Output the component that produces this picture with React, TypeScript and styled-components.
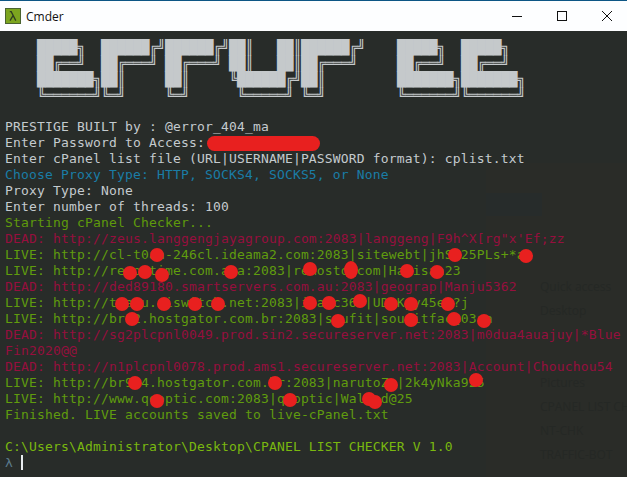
import { FC } from 'react'
import styled, { createGlobalStyle } from 'styled-components'

const GlobalStyle = createGlobalStyle`
  html, body {
    margin: 0;
    padding: 0;
    background: #282c29;
  }
`

type Tone = 'art' | 'white' | 'blue' | 'start' | 'dead' | 'live' | 'path' | 'plain'

const tones: Record<Tone, string> = {
  art: '#c5c9cb',
  white: '#c4cace',
  blue: '#1a7da6',
  start: '#5f9a0c',
  dead: '#960f3e',
  live: '#609c0e',
  path: '#7ab80f',
  plain: '#c4cace',
}

const Window = styled.div`
  position: relative;
  width: 627px;
  height: 477px;
  display: flex;
  flex-direction: column;
  overflow: hidden;
`

const TitleBar = styled.header`
  flex: 0 0 31px;
  box-sizing: border-box;
  display: flex;
  align-items: center;
  border-top: 1px solid #0d5685;
  background: #fdfeff;
  padding-left: 5px;
`

const AppIcon = styled.svg`
  width: 16px;
  height: 16px;
  flex: none;
`

const Title = styled.span`
  margin-left: 5px;
  font: 12px 'Open Sans', sans-serif;
  color: #111;
  flex: 1;
`

const Controls = styled.div`
  display: flex;
  margin-right: -2px;
`

const ControlButton = styled.div`
  width: 45px;
  height: 30px;
  display: flex;
  align-items: center;
  justify-content: center;
  svg {
    width: 10px;
    height: 10px;
    stroke: #111;
    stroke-width: 1;
    fill: none;
  }
`

const Terminal = styled.main`
  position: relative;
  flex: 1;
  box-sizing: border-box;
  padding: 8px 0 0 5px;
  background: #282c29;
  overflow: hidden;
`

/* the explorer window that shines through the transparent console */
const GhostPanel = styled.div`
  position: absolute;
  left: 486px;
  top: 132px;
  right: 0;
  bottom: 0;
  background: #2a2c28;
  display: flex;
  flex-direction: column;
`

const GhostTab = styled.div`
  width: 56px;
  height: 23px;
  margin-top: 30px;
  background: #272c2b;
`

const GhostList = styled.ul`
  list-style: none;
  margin: 62px 0 0;
  padding: 0 0 0 54px;
  display: flex;
  flex-direction: column;
  gap: 6px;
`

const GhostItem = styled.li<{ $gapAfter?: number }>`
  font: 12px/18px 'Open Sans', sans-serif;
  color: #252825;
  white-space: nowrap;
  margin-bottom: ${(p) => p.$gapAfter ?? 0}px;
`

const Lines = styled.div`
  position: relative;
  font-family: 'DejaVu Sans Mono', monospace;
  font-size: 13px;
  letter-spacing: 0.17px;
  line-height: 16px;
`

const Row = styled.div<{ $tone: Tone }>`
  height: 16px;
  white-space: pre;
  color: ${(p) => tones[p.$tone]};
`

const Banner = styled.div`
  font-size: 14px;
  letter-spacing: -0.43px;
`

const Prompt = styled.span`
  color: #5b7b8c;
`

const Cursor = styled.span`
  display: inline-block;
  width: 2px;
  height: 15px;
  background: #e8ecee;
  vertical-align: -3px;
`

const Mark = styled.span<{ $x: number; $y: number; $w: number; $h: number }>`
  position: absolute;
  left: ${(p) => p.$x - p.$w / 2}px;
  top: ${(p) => p.$y - p.$h / 2}px;
  width: ${(p) => p.$w}px;
  height: ${(p) => p.$h}px;
  border-radius: 50%;
  background: #e8201f;
`

const PasswordBlot = styled.span`
  position: absolute;
  left: 207px;
  top: 136px;
  width: 113px;
  height: 15px;
  border-radius: 8px;
  background: #e8201f;
`

const banner = [
  '    █████╗  ██████╔╝██████╔╝██║   ██║██████╔╝    █████╗  █████╗  ',
  '    ██╔══╝  ██╔═══╝ ██╔═══╝ ██║   ██║██╔═══╝     ██╔══╝  ██╔══╝  ',
  '    ███████╗██║     ██║     ╚██████╔╝██║         ███████╗███████╗',
  '    ╚══════╝╚═╝     ╚═╝      ╚═════╝ ╚═╝         ╚══════╝╚══════╝',
]

const output: [Tone, string][] = [
  ['plain', ''],
  ['white', 'PRESTIGE BUILT by : @error_404_ma'],
  ['white', 'Enter Password to Access: '],
  ['white', 'Enter cPanel list file (URL|USERNAME|PASSWORD format): cplist.txt'],
  ['blue', 'Choose Proxy Type: HTTP, SOCKS4, SOCKS5, or None'],
  ['white', 'Proxy Type: None'],
  ['white', 'Enter number of threads: 100'],
  ['start', 'Starting cPanel Checker...'],
  ['dead', `DEAD: http://zeus.langgengjayagroup.com:2083|langgeng|F9h^X[rg"x'Ef;zz`],
  ['live', 'LIVE: http://cl-t0aa-246cl.ideama2.com:2083|sitewebt|jhSa25PLs+*aa'],
  ['live', 'LIVE: http://remostime.com.aua:2083|remosto.com|Hamisaa23'],
  ['dead', 'DEAD: http://ded89180.smartservers.com.au:2083|geograp|Manju5362'],
  ['live', 'LIVE: http://taasu.aiswitch.net:2083|ioa1c366|UDgKpy45eA?j'],
  ['live', 'LIVE: http://br12.hostgator.com.br:2083|soufit|soufitfac@03aa'],
  ['dead', 'DEAD: http://sg2plcpnl0049.prod.sin2.secureserver.net:2083|m0dua4auajuy|*Blue'],
  ['dead', 'Fin2020@@'],
  ['dead', 'DEAD: http://n1plcpnl0078.prod.ams1.secureserver.net:2083|Account|Chouchou54'],
  ['live', 'LIVE: http://br904.hostgator.com.br:2083|narutoZa|2k4yNka925'],
  ['live', 'LIVE: http://www.qooptic.com:2083|qooptic|Waleed@25'],
  ['live', 'Finished. LIVE accounts saved to live-cPanel.txt'],
  ['plain', ''],
  ['path', 'C:\\Users\\Administrator\\Desktop\\CPANEL LIST CHECKER V 1.0'],
]

// [x, y, w, h] centre of each blot, in page pixels
const marks: [number, number, number, number][] = [
  [157, 255, 14, 14], [455, 255, 14, 14], [526, 256, 14, 14],
  [130, 273, 14, 14], [145, 272, 14, 14], [162, 275, 14, 14], [231, 272, 14, 14],
  [310, 269, 14, 14], [351, 270, 14, 18], [407, 271, 14, 14], [437, 272, 14, 14],
  [122, 304, 14, 14], [137, 304, 14, 14], [164, 304, 14, 14], [195, 304, 14, 14],
  [218, 304, 14, 14], [310, 303, 14, 14], [329, 303, 14, 14], [360, 301, 14, 14],
  [391, 304, 14, 14], [411, 304, 14, 14], [448, 304, 14, 14],
  [132, 319, 14, 14], [338, 321, 14, 14], [411, 320, 14, 14], [454, 319, 14, 14], [484, 321, 14, 14],
  [135, 383, 14, 14], [275, 383, 14, 14], [391, 385, 14, 14], [476, 380, 14, 14],
  [157, 401, 14, 14], [290, 400, 14, 14], [369, 399, 14, 14], [375, 402, 14, 14],
]

const App: FC = () => {
  return (
    <Window>
      <GlobalStyle />
      <TitleBar>
        <AppIcon viewBox="0 0 16 16">
          <rect x="0.5" y="0.5" width="15" height="15" fill="#7ca51f" stroke="#4a6330" />
          <path d="M4.8 3.6 H6.2 L10.8 12.6 M8.2 7.4 L5 12.6" fill="none" stroke="#2f3d22" strokeWidth="1.3" />
        </AppIcon>
        <Title>Cmder</Title>
        <Controls>
          <ControlButton>
            <svg viewBox="0 0 10 10"><path d="M0 5.5 H10" /></svg>
          </ControlButton>
          <ControlButton>
            <svg viewBox="0 0 10 10"><rect x="0.5" y="0.5" width="9" height="9" /></svg>
          </ControlButton>
          <ControlButton>
            <svg viewBox="0 0 10 10"><path d="M0 0 L10 10 M10 0 L0 10" /></svg>
          </ControlButton>
        </Controls>
      </TitleBar>
      <Terminal>
        <GhostPanel>
          <GhostTab />
          <GhostList>
            <GhostItem>Quick access</GhostItem>
            <GhostItem $gapAfter={48}>Desktop</GhostItem>
            <GhostItem>Pictures</GhostItem>
            <GhostItem>CPANEL LIST CH</GhostItem>
            <GhostItem>NT-CHK</GhostItem>
            <GhostItem>TRAFFIC-BOT</GhostItem>
          </GhostList>
        </GhostPanel>
        <Lines>
          <Banner>
            {banner.map((line, i) => (
              <Row key={i} $tone="art">{line}</Row>
            ))}
          </Banner>
          {output.map(([tone, text], i) => (
            <Row key={i} $tone={tone}>{text}</Row>
          ))}
          <Row $tone="white">
            <Prompt>λ </Prompt>
            <Cursor />
          </Row>
        </Lines>
      </Terminal>
      <PasswordBlot />
      {marks.map(([x, y, w, h], i) => (
        <Mark key={i} $x={x} $y={y} $w={w} $h={h} />
      ))}
    </Window>
  )
}

export default App
